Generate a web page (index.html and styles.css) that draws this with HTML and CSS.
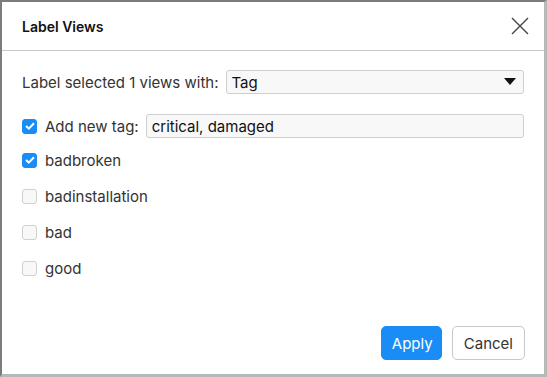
FILE: index.html
```html
<!DOCTYPE html>
<html>
<head>
<meta charset="utf-8">
<link rel="stylesheet" href="styles.css">
</head>
<body>
<div class="dialog">
  <div class="header">
    <span class="title">Label Views</span>
    <svg class="close" width="18" height="18" viewBox="0 0 18 18"><path d="M1 1L17 17M17 1L1 17" stroke="#444" stroke-width="1.4" fill="none"/></svg>
  </div>
  <div class="body">
    <div class="row first">
      <span class="label">Label selected 1 views with:</span>
      <div class="select"><span>Tag</span><svg width="12" height="8" viewBox="0 0 12 8"><path d="M0 0H12L6 7Z" fill="#111"/></svg></div>
    </div>
    <div class="row second">
      <span class="cb on"><svg width="10" height="8" viewBox="0 0 10 8"><path d="M1 4L3.8 6.6L9 1.2" stroke="#fff" stroke-width="2" fill="none"/></svg></span>
      <span class="label">Add new tag:</span>
      <div class="input">critical, damaged</div>
    </div>
    <div class="row"><span class="cb on"><svg width="10" height="8" viewBox="0 0 10 8"><path d="M1 4L3.8 6.6L9 1.2" stroke="#fff" stroke-width="2" fill="none"/></svg></span><span class="label">badbroken</span></div>
    <div class="row"><span class="cb"></span><span class="label">badinstallation</span></div>
    <div class="row"><span class="cb"></span><span class="label">bad</span></div>
    <div class="row"><span class="cb"></span><span class="label">good</span></div>
  </div>
  <div class="footer">
    <button class="btn primary">Apply</button>
    <button class="btn">Cancel</button>
  </div>
</div>
</body>
</html>
```
FILE: styles.css
```css
html, body { margin: 0; padding: 0; background: #fff; }
body { font-family: Inter, "Noto Sans", sans-serif; color: #333; font-size: 15px; }
.dialog {
  width: 547px; height: 377px; box-sizing: border-box;
  border-style: solid; border-width: 2px 3px 3px 2px;
  border-color: #7c7c7c #b8b8b8 #b8b8b8 #7c7c7c;
  display: flex; flex-direction: column; background: #fff;
}
.header {
  height: 49px; box-sizing: border-box; border-bottom: 1px solid #c8c8c8;
  display: flex; align-items: center; justify-content: space-between;
  padding: 0 15px 0 20px;
}
.title { font-weight: 600; font-size: 14px; color: #111; }
.close { display: block; }
.body { padding: 19px 20px 0 20px; flex: 1; }
.row { display: flex; align-items: center; height: 24px; margin-bottom: 12px; }
.row.first { margin-bottom: 20px; }
.row.second { margin-bottom: 10px; }
.label { color: #333; white-space: nowrap; }
.first .label { margin-right: 8px; }
.select {
  flex: 1; height: 24px; box-sizing: border-box; border: 1px solid #cfcfcf; border-radius: 3px;
  background: #f8f8f8; display: flex; align-items: center; justify-content: space-between;
  padding: 0 7px 0 4px; color: #111;
}
.input {
  flex: 1; height: 24px; box-sizing: border-box; border: 1px solid #cfcfcf; border-radius: 3px;
  background: #f8f8f8; display: flex; align-items: center; padding: 0 5px; color: #111; margin-left: 7px;
}
.cb {
  width: 15px; height: 15px; box-sizing: border-box; border-radius: 3px;
  border: 1px solid #d0d0d0; background: #f8f8f8; margin-right: 8px;
  display: flex; align-items: center; justify-content: center;
}
.cb.on { background: #1a8cf5; border-color: #1a8cf5; }
.footer { display: flex; justify-content: flex-end; gap: 10px; padding: 0 19px 14px 0; }
.btn {
  font-family: Inter, "Noto Sans", sans-serif; font-size: 15px; height: 34px;
  border: 1px solid #c8c8c8; border-radius: 5px; background: #fff; color: #333; padding: 0 11px;
}
.btn.primary { background: #1a8cf5; border-color: #1a8cf5; color: #fff; padding: 0 10px; width: 61px; }
```
